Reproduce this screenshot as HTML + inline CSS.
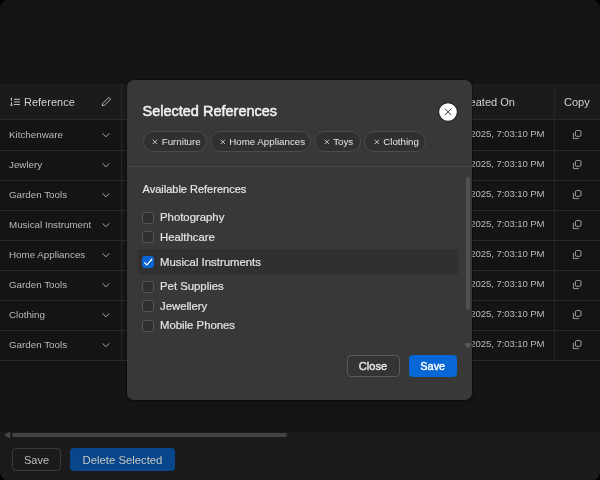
<!DOCTYPE html>
<html><head><meta charset="utf-8">
<style>
*{box-sizing:border-box;margin:0;padding:0}
html,body{width:600px;height:480px;background:#000;overflow:hidden}
body{font-family:"Liberation Sans",sans-serif;position:relative}
.page{will-change:transform;position:absolute;left:0;top:0;width:600px;height:480px;background:#141414;border-radius:8px;overflow:hidden}
.abs{position:absolute}
.hdr{left:0;top:84px;width:600px;height:36px;background:#1b1b1b}
.hline{left:0;width:600px;height:1px;background:#2a2a2a}
.vline{top:84px;width:1px;height:277px;background:#262626}
.cell{position:absolute;font-size:9.8px;color:#bababa;white-space:nowrap;line-height:12px}
.hcell{position:absolute;font-size:11px;color:#d2d2d2;white-space:nowrap;line-height:12px}
.chev{position:absolute;left:101.7px;width:8px;height:6px}
.date{position:absolute;right:55.5px;font-size:9.6px;letter-spacing:-0.1px;color:#bababa;white-space:nowrap;line-height:12px}
.copy{position:absolute;left:572px;width:11px;height:11px}
.footer{left:0;top:432px;width:600px;height:48px;background:#1b1b1b}
.thumb{left:12px;top:433px;width:275px;height:4px;border-radius:2px;background:#424242}
.btn{position:absolute;border-radius:4px;font-size:11px;line-height:22px;text-align:center;white-space:nowrap}
.overlay{left:0;top:0;width:600px;height:480px}
.modal{left:127px;top:80px;width:345px;height:320px;background:#383838;border-radius:7px;box-shadow:0 0 0 1px rgba(0,0,0,0.3),0 1px 2px rgba(0,0,0,0.25);overflow:hidden}
.title{position:absolute;left:15.5px;top:23.2px;font-size:14.5px;font-weight:normal;-webkit-text-stroke:0.5px #f2f2f2;color:#f2f2f2;line-height:16px;white-space:nowrap}
.chip{position:absolute;top:51px;height:21px;border:1px solid #4c4c4c;background:#303030;border-radius:11px;font-size:9.75px;color:#e6e6e6;line-height:19px;white-space:nowrap}
.chip svg{position:absolute;left:8.5px;top:7px}
.chip span{position:absolute;left:18.2px;top:0}
.sep{position:absolute;left:0;top:86px;width:345px;height:1px;background:#474747}
.avail{position:absolute;left:15.5px;top:102px;font-size:11px;color:#e8e8e8;-webkit-text-stroke:0.2px #e8e8e8;line-height:14px;white-space:nowrap}
.item{position:absolute;left:0;width:330px;height:20px}
.cb{position:absolute;left:15px;width:12.2px;height:12px;border:1px solid #555;background:#2f2f2f;border-radius:2.5px}
.cb.on{background:#0a64d2;border-color:#0a64d2}
.lbl{position:absolute;left:33px;font-size:11.35px;color:#e4e4e4;-webkit-text-stroke:0.2px #e4e4e4;line-height:14px;white-space:nowrap}
.hl{position:absolute;left:10.5px;top:170px;width:320px;height:23.5px;background:#303030;box-shadow:inset 0 1px 0 rgba(0,0,0,0.08),inset 0 -1px 0 rgba(0,0,0,0.08)}
.sthumb{position:absolute;left:339px;top:97px;width:4px;height:133px;border-radius:2px;background:#505050}
</style></head><body>
<div class="page">
  <div class="abs hdr"></div>
  <div class="abs hline" style="top:119px"></div>
  <div class="abs hline" style="top:150px"></div>
  <div class="abs hline" style="top:180px"></div>
  <div class="abs hline" style="top:210px"></div>
  <div class="abs hline" style="top:240px"></div>
  <div class="abs hline" style="top:270px"></div>
  <div class="abs hline" style="top:300px"></div>
  <div class="abs hline" style="top:330px"></div>
  <div class="abs hline" style="top:360px"></div>
  <div class="abs vline" style="left:121px"></div>
  <div class="abs vline" style="left:554px"></div>

  <!-- header -->
  <svg class="abs" style="left:9px;top:96px" width="13" height="12" viewBox="0 0 13 12">
    <path d="M1.6 2.7 L2.5 2.0 V5.0" stroke="#bdbdbd" stroke-width="1" fill="none"/>
    <path d="M2.5 6.1 V9.8 M1.1 8.6 L2.5 10 L3.9 8.6" stroke="#bdbdbd" stroke-width="1" fill="none"/>
    <path d="M5 3.3 H11 M5 5.9 H11 M5 8.5 H11" stroke="#bdbdbd" stroke-width="1" fill="none"/>
  </svg>
  <div class="hcell" style="left:24px;top:96px">Reference</div>
  <svg class="abs" style="left:100px;top:96px" width="12" height="12" viewBox="0 0 12 12">
    <path d="M2.2 9.6 L2.6 7.6 L8.8 1.4 L10.6 3.2 L4.4 9.4 Z" stroke="#c4c4c4" stroke-width="0.9" fill="none" stroke-linejoin="round"/>
  </svg>
  <div class="hcell" style="left:458px;top:96px">Created On</div>
  <div class="hcell" style="left:564px;top:96px">Copy</div>

  <!-- rows -->
  <div class="cell" style="left:9px;top:129px">Kitchenware</div>
  <div class="cell" style="left:9px;top:159px">Jewlery</div>
  <div class="cell" style="left:9px;top:189px">Garden Tools</div>
  <div class="cell" style="left:9px;top:219px">Musical Instrument</div>
  <div class="cell" style="left:9px;top:249px">Home Appliances</div>
  <div class="cell" style="left:9px;top:279px">Garden Tools</div>
  <div class="cell" style="left:9px;top:309px">Clothing</div>
  <div class="cell" style="left:9px;top:339px">Garden Tools</div>
  <svg class="chev" style="top:132px" viewBox="0 0 8 6" width="8" height="6"><path d="M0.6 1.4 L3.9 4.8 L7.2 1.4" stroke="#b0b0b0" stroke-width="0.95" fill="none"/></svg>
  <svg class="chev" style="top:162px" viewBox="0 0 8 6" width="8" height="6"><path d="M0.6 1.4 L3.9 4.8 L7.2 1.4" stroke="#b0b0b0" stroke-width="0.95" fill="none"/></svg>
  <svg class="chev" style="top:192px" viewBox="0 0 8 6" width="8" height="6"><path d="M0.6 1.4 L3.9 4.8 L7.2 1.4" stroke="#b0b0b0" stroke-width="0.95" fill="none"/></svg>
  <svg class="chev" style="top:222px" viewBox="0 0 8 6" width="8" height="6"><path d="M0.6 1.4 L3.9 4.8 L7.2 1.4" stroke="#b0b0b0" stroke-width="0.95" fill="none"/></svg>
  <svg class="chev" style="top:252px" viewBox="0 0 8 6" width="8" height="6"><path d="M0.6 1.4 L3.9 4.8 L7.2 1.4" stroke="#b0b0b0" stroke-width="0.95" fill="none"/></svg>
  <svg class="chev" style="top:282px" viewBox="0 0 8 6" width="8" height="6"><path d="M0.6 1.4 L3.9 4.8 L7.2 1.4" stroke="#b0b0b0" stroke-width="0.95" fill="none"/></svg>
  <svg class="chev" style="top:312px" viewBox="0 0 8 6" width="8" height="6"><path d="M0.6 1.4 L3.9 4.8 L7.2 1.4" stroke="#b0b0b0" stroke-width="0.95" fill="none"/></svg>
  <svg class="chev" style="top:342px" viewBox="0 0 8 6" width="8" height="6"><path d="M0.6 1.4 L3.9 4.8 L7.2 1.4" stroke="#b0b0b0" stroke-width="0.95" fill="none"/></svg>
  <div class="date" style="top:128px">Feb 12, 2025, 7:03:10 PM</div>
  <div class="date" style="top:158px">Feb 12, 2025, 7:03:10 PM</div>
  <div class="date" style="top:188px">Feb 12, 2025, 7:03:10 PM</div>
  <div class="date" style="top:218px">Feb 12, 2025, 7:03:10 PM</div>
  <div class="date" style="top:248px">Feb 12, 2025, 7:03:10 PM</div>
  <div class="date" style="top:278px">Feb 12, 2025, 7:03:10 PM</div>
  <div class="date" style="top:308px">Feb 12, 2025, 7:03:10 PM</div>
  <div class="date" style="top:338px">Feb 12, 2025, 7:03:10 PM</div>
  <svg class="copy" style="top:129px" viewBox="0 0 11 11" width="11" height="11"><rect x="3.4" y="1.55" width="5.6" height="5.8" rx="1.3" stroke="#a8a8a8" stroke-width="0.95" fill="none"/><path d="M1.4 3.9 V9.6 H6.8" stroke="#a8a8a8" stroke-width="0.9" fill="none"/></svg>
  <svg class="copy" style="top:159px" viewBox="0 0 11 11" width="11" height="11"><rect x="3.4" y="1.55" width="5.6" height="5.8" rx="1.3" stroke="#a8a8a8" stroke-width="0.95" fill="none"/><path d="M1.4 3.9 V9.6 H6.8" stroke="#a8a8a8" stroke-width="0.9" fill="none"/></svg>
  <svg class="copy" style="top:189px" viewBox="0 0 11 11" width="11" height="11"><rect x="3.4" y="1.55" width="5.6" height="5.8" rx="1.3" stroke="#a8a8a8" stroke-width="0.95" fill="none"/><path d="M1.4 3.9 V9.6 H6.8" stroke="#a8a8a8" stroke-width="0.9" fill="none"/></svg>
  <svg class="copy" style="top:219px" viewBox="0 0 11 11" width="11" height="11"><rect x="3.4" y="1.55" width="5.6" height="5.8" rx="1.3" stroke="#a8a8a8" stroke-width="0.95" fill="none"/><path d="M1.4 3.9 V9.6 H6.8" stroke="#a8a8a8" stroke-width="0.9" fill="none"/></svg>
  <svg class="copy" style="top:249px" viewBox="0 0 11 11" width="11" height="11"><rect x="3.4" y="1.55" width="5.6" height="5.8" rx="1.3" stroke="#a8a8a8" stroke-width="0.95" fill="none"/><path d="M1.4 3.9 V9.6 H6.8" stroke="#a8a8a8" stroke-width="0.9" fill="none"/></svg>
  <svg class="copy" style="top:279px" viewBox="0 0 11 11" width="11" height="11"><rect x="3.4" y="1.55" width="5.6" height="5.8" rx="1.3" stroke="#a8a8a8" stroke-width="0.95" fill="none"/><path d="M1.4 3.9 V9.6 H6.8" stroke="#a8a8a8" stroke-width="0.9" fill="none"/></svg>
  <svg class="copy" style="top:309px" viewBox="0 0 11 11" width="11" height="11"><rect x="3.4" y="1.55" width="5.6" height="5.8" rx="1.3" stroke="#a8a8a8" stroke-width="0.95" fill="none"/><path d="M1.4 3.9 V9.6 H6.8" stroke="#a8a8a8" stroke-width="0.9" fill="none"/></svg>
  <svg class="copy" style="top:339px" viewBox="0 0 11 11" width="11" height="11"><rect x="3.4" y="1.55" width="5.6" height="5.8" rx="1.3" stroke="#a8a8a8" stroke-width="0.95" fill="none"/><path d="M1.4 3.9 V9.6 H6.8" stroke="#a8a8a8" stroke-width="0.9" fill="none"/></svg>

  <!-- footer -->
  <div class="abs footer"></div>
  <div class="abs thumb"></div>
  <svg class="abs" style="left:3px;top:431px" width="9" height="8" viewBox="0 0 9 8"><path d="M2.2 4 L6.5 1.6 V6.4 Z" fill="#464646" stroke="#464646" stroke-width="1.2" stroke-linejoin="round"/></svg>
  <div class="btn" style="left:12px;top:448px;width:49px;height:23px;border:1px solid #3a3a3a;color:#bdbdbd">Save</div>
  <div class="btn" style="left:70px;top:448px;width:105px;height:23px;background:#07468b;color:#cac6bf;font-size:11.3px;padding-top:0.8px">Delete Selected</div>

  <!-- modal -->
  <div class="abs modal">
    <div class="title">Selected References</div>
    <svg class="abs" style="left:310.8px;top:22px" width="20" height="20" viewBox="0 0 20 20"><circle cx="10" cy="10" r="9.4" fill="#fff" stroke="#1e1e1e" stroke-width="1.1"/><path d="M6.9 6.6 L13.3 13 M13.3 6.6 L6.9 13" stroke="#333" stroke-width="1"/></svg>
    <div class="chip" style="left:15.5px;width:64px"><svg width="6" height="6" viewBox="0 0 6 6"><path d="M0.7 0.7 L5 5 M5 0.7 L0.7 5" stroke="#d8d8d8" stroke-width="0.85"/></svg><span>Furniture</span></div>
    <div class="chip" style="left:83px;width:101px"><svg width="6" height="6" viewBox="0 0 6 6"><path d="M0.7 0.7 L5 5 M5 0.7 L0.7 5" stroke="#d8d8d8" stroke-width="0.85"/></svg><span>Home Appliances</span></div>
    <div class="chip" style="left:187px;width:47px"><svg width="6" height="6" viewBox="0 0 6 6"><path d="M0.7 0.7 L5 5 M5 0.7 L0.7 5" stroke="#d8d8d8" stroke-width="0.85"/></svg><span>Toys</span></div>
    <div class="chip" style="left:237px;width:62px"><svg width="6" height="6" viewBox="0 0 6 6"><path d="M0.7 0.7 L5 5 M5 0.7 L0.7 5" stroke="#d8d8d8" stroke-width="0.85"/></svg><span>Clothing</span></div>
    <div class="sep"></div>
    <div class="avail">Available References</div>
    <div class="hl"></div>
    <div class="cb" style="top:131.5px"></div><div class="lbl" style="top:130.1px">Photography</div>
    <div class="cb" style="top:151px"></div><div class="lbl" style="top:149.6px">Healthcare</div>
    <div class="cb on" style="top:176px"><svg class="abs" style="left:0;top:0" width="10" height="10" viewBox="0 0 10 10"><path d="M1.3 5.6 L3.9 7.9 L9.1 1.95" stroke="#fff" stroke-width="1.3" fill="none"/></svg></div><div class="lbl" style="top:174.6px">Musical Instruments</div>
    <div class="cb" style="top:200.5px"></div><div class="lbl" style="top:199.1px">Pet Supplies</div>
    <div class="cb" style="top:220px"></div><div class="lbl" style="top:218.6px">Jewellery</div>
    <div class="cb" style="top:239.5px"></div><div class="lbl" style="top:238.1px">Mobile Phones</div>
    <div class="sthumb"></div>
    <svg class="abs" style="left:337px;top:262px" width="8" height="8" viewBox="0 0 8 8"><path d="M1.4 1.8 H6.6 L4 5.6 Z" fill="#5a5a5a" stroke="#5a5a5a" stroke-width="1.1" stroke-linejoin="round"/></svg>
    <div class="btn" style="left:219.5px;top:275px;width:53px;height:22px;border:1px solid #5a5a5a;background:#343434;color:#e8e8e8;font-size:11.1px;-webkit-text-stroke:0.4px #e8e8e8;line-height:20px">Close</div>
    <div class="btn" style="left:281.5px;top:275px;width:48.5px;height:22px;background:#0767d4;color:#fff;font-size:10.9px;-webkit-text-stroke:0.4px #fff;line-height:22px">Save</div>
  </div>
</div>
</body></html>
